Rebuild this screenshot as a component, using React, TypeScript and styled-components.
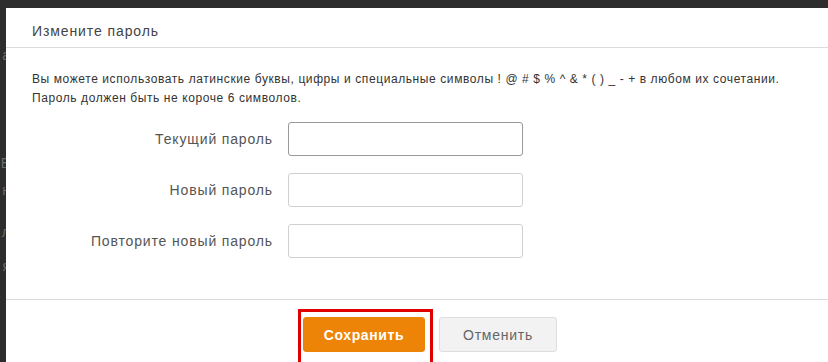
import styled, { createGlobalStyle } from "styled-components";

const Global = createGlobalStyle`
    html, body { margin: 0; padding: 0; }
    body {
        background: #2d2d2d;
        font-family: "Liberation Sans", Arial, sans-serif;
        overflow: hidden;
    }
`;

// bits of the page under the overlay that peek out on the left
const peeks = [
    { ch: "а", y: 48 },
    { ch: "|", y: 54 },
    { ch: "Е", y: 26 },
    { ch: "н", y: 13 },
    { ch: "л", y: 28 },
    { ch: "я", y: 20 },
];

const fields = ["Текущий пароль", "Новый пароль", "Повторите новый пароль"];

function App() {
    return <>
        <Global />
        <Page>
            <Behind>
                {peeks.map((p, i) => <Peek key={i} $y={p.y}>{p.ch}</Peek>)}
            </Behind>
            <Modal>
                <Header>Измените пароль</Header>
                <Body>
                    <Hint>
                        Вы можете использовать латинские буквы, цифры и специальные символы ! @ # $ % ^ &amp; * ( ) _ - + в любом их сочетании.<br />
                        Пароль должен быть не короче 6 символов.
                    </Hint>
                    <Form>
                        {fields.map((f, i) => <Row key={f}>
                            <Label>{f}</Label>
                            <Input type="password" $active={i === 0} />
                        </Row>)}
                    </Form>
                </Body>
                <Footer>
                    <Highlight>
                        <Button $primary>Сохранить</Button>
                    </Highlight>
                    <Button>Отменить</Button>
                </Footer>
            </Modal>
        </Page>
    </>
}

export default App;

const Page = styled.div`
    display: flex;
    height: 362px;
    overflow: hidden;
`;

const Behind = styled.div`
    width: 6px;
    flex: none;
    display: flex;
    flex-direction: column;
    align-items: flex-end;
    overflow: hidden;
`;

const Peek = styled.span<{ $y: number }>`
    margin-top: ${p => p.$y}px;
    margin-right: -4px;
    font-size: 14px;
    line-height: 14px;
    color: #6a6a6a;
`;

const Modal = styled.div`
    width: 830px;
    flex: none;
    margin-top: 8px;
    background: #fff;
    display: flex;
    flex-direction: column;
`;

const Header = styled.div`
    height: 44px;
    box-sizing: border-box;
    padding: 15px 26px 0;
    font-size: 14px;
    letter-spacing: 0.9px;
    color: #444;
    border-bottom: 1px solid #dcdcdc;
`;

const Body = styled.div`
    padding: 22px 26px 41px;
    border-bottom: 1px solid #dcdcdc;
`;

const Hint = styled.p`
    margin: 0;
    font-size: 12px;
    line-height: 19px;
    letter-spacing: 0.59px;
    color: #333;
`;

const Form = styled.div`
    display: flex;
    flex-direction: column;
    gap: 17px;
    margin-top: 14px;
`;

const Row = styled.div`
    display: grid;
    grid-template-columns: 241px 235px;
    column-gap: 15px;
    align-items: center;
`;

const Label = styled.label`
    text-align: right;
    font-size: 14px;
    letter-spacing: 0.85px;
    color: #555;
`;

const Input = styled.input<{ $active?: boolean }>`
    height: 34px;
    box-sizing: border-box;
    border: 1px solid ${p => p.$active ? "#999" : "#d0d0d0"};
    border-radius: 3px;
    padding: 0 8px;
    outline: none;
    font-size: 14px;
`;

const Footer = styled.div`
    display: flex;
    align-items: flex-start;
    gap: 6px;
    padding-left: 292px;
    padding-top: 9px;
`;

const Highlight = styled.div`
    border: 3px solid #e00000;
    border-bottom: none;
    padding: 5px 5px 10px 2px;
`;

const Button = styled.button<{ $primary?: boolean }>`
    height: 35px;
    box-sizing: border-box;
    padding: 0;
    width: ${p => p.$primary ? "122px" : "118px"};
    margin-top: ${p => p.$primary ? "0" : "8px"};
    border-radius: 3px;
    font-family: inherit;
    font-size: 14px;
    letter-spacing: ${p => p.$primary ? "0.6px" : "0.75px"};
    font-weight: ${p => p.$primary ? "bold" : "normal"};
    color: ${p => p.$primary ? "#fff" : "#666"};
    background: ${p => p.$primary ? "#ee8407" : "#f2f2f2"};
    border: 1px solid ${p => p.$primary ? "#ee8407" : "#dedede"};
`;
